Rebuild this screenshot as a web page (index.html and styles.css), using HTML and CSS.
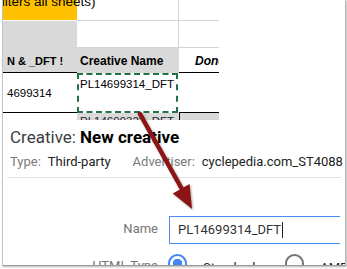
FILE: index.html
```html
<!DOCTYPE html>
<html>
<head>
<meta charset="utf-8">
<link rel="stylesheet" href="styles.css">
</head>
<body>
<div class="frame">
  <div class="sheet">
    <div class="cell yellow"><span class="cut">filters all sheets)</span></div>
    <div class="cell gb gr"></div>
    <div class="cell gb"></div>
    <div class="cell gray"></div>
    <div class="cell gb gr"></div>
    <div class="cell gb"></div>
    <div class="cell gray hdr bl hdr1">N &amp; _DFT !</div>
    <div class="cell gray hdr hdr2">Creative Name</div>
    <div class="cell hdr done bl">Done</div>
    <div class="cell val bl">4699314</div>
    <div class="cell sel">PL14699314_DFT</div>
    <div class="cell bl"></div>
    <div class="cell"></div>
    <div class="cell gray peek">PL14699323_DFT</div>
    <div class="cell gray tick"></div>
  </div>
  <div class="dialog">
    <div class="title"><span class="t-label">Creative:</span> <span class="t-name">New creative</span></div>
    <div class="meta"><span class="k">Type:</span><span class="v">Third-party</span><span class="k adv">Advertiser:</span><span class="v">cyclepedia.com_ST4088</span></div>
    <div class="sep"></div>
    <div class="row name-row">
      <div class="lbl">Name</div>
      <div class="input">PL14699314_DFT<span class="caret"></span></div>
    </div>
    <div class="row type-row">
      <div class="lbl">HTML Type</div>
      <div class="radios">
        <span class="radio on"></span><span class="rtext">Standard</span>
        <span class="radio off"></span><span class="rtext">AMPHTML</span>
      </div>
    </div>
  </div>
</div>
<svg class="arrow" width="347" height="269" viewBox="0 0 347 269">
  <line x1="140" y1="114" x2="183" y2="191" stroke="#8c1414" stroke-width="4.5" stroke-linecap="round"/>
  <polygon points="192,209 172.8,193.6 189.6,184" fill="#8c1414"/>
</svg>
</body>
</html>
```
FILE: styles.css
```css
html, body {
  margin: 0;
  padding: 0;
  background: #fff;
}
body {
  position: relative;
  width: 347px;
  height: 269px;
  overflow: hidden;
}
.frame {
  margin-left: 2px;
  width: 344px;
  height: 266px;
  box-sizing: border-box;
  border-left: 1px solid #c4c4c4;
  border-right: 1px solid #b8b8b8;
  border-bottom: 1px solid #9a9a9a;
  box-shadow: 1px 1px 2px rgba(0,0,0,0.3);
  overflow: hidden;
  background: #fff;
}
.sheet {
  display: grid;
  grid-template-columns: 74px 102px 40px;
  grid-template-rows: 21px 27px 25px 40px 7px;
  font-family: "Liberation Sans", Arial, sans-serif;
  color: #000;
}
.cell {
  box-sizing: border-box;
  overflow: hidden;
  white-space: nowrap;
}
.yellow {
  background: #ffc000;
  height: 20px;
  overflow: visible;
  position: relative;
  z-index: 1;
}
.cut {
  display: block;
  font-size: 13.5px;
  line-height: 13px;
  margin-top: -5px;
  margin-left: -5px;
  white-space: nowrap;
}
.gb { border-bottom: 1px solid #d4d4d4; }
.gr { border-right: 1px solid #d4d4d4; }
.gray { background: #d9d9d9; }
.bl { border-bottom: 1px solid #000; }
.hdr {
  font-weight: bold;
  font-size: 12px;
  line-height: 24px;
  padding-top: 1px;
}
.hdr1 { padding-left: 4px; font-size: 11px; }
.hdr2 { padding-left: 3px; }
.done {
  font-style: italic;
  padding-left: 16px;
  font-size: 12px;
}
.val {
  font-size: 11.5px;
  padding: 14px 0 0 4px;
}
.sel {
  border: 2px dashed #217346;
  width: 101px;
  font-size: 11.5px;
  padding: 2px 0 0 1px;
  line-height: 14px;
}
.peek {
  font-size: 11.5px;
  line-height: 13px;
  padding: 2px 0 0 3px;
  color: #222;
}
.tick { border-left: 1px solid #000; }

.dialog {
  font-family: Roboto, "Liberation Sans", Arial, sans-serif;
  padding: 7px 4px 0 7px;
  background: #fff;
}
.title {
  font-size: 17px;
  line-height: 20px;
  white-space: nowrap;
}
.t-label { color: #3c3c3c; }
.t-name { font-weight: bold; color: #000; }
.meta {
  margin-top: 7px;
  font-size: 13px;
  line-height: 16px;
  white-space: nowrap;
  display: flex;
}
.k { color: #7a7a7a; }
.v { color: #212121; margin-left: 7px; }
.adv { margin-left: 22px; }
.sep {
  margin: 7px 0 0 -3px;
  height: 1px;
  background: #e3e3e3;
}
.row {
  display: flex;
  align-items: center;
  gap: 11px;
}
.lbl {
  width: 148px;
  text-align: right;
  color: #757575;
  font-size: 13px;
  flex: none;
}
.name-row {
  margin-top: 38px;
}
.name-row .lbl { margin-top: -4px; }
.input {
  box-sizing: border-box;
  width: 171px;
  height: 28px;
  border: 1px solid #4d8ef2;
  border-right: none;
  padding-left: 8px;
  font-size: 13px;
  line-height: 26px;
  color: #333;
  display: flex;
  align-items: center;
}
.caret {
  display: inline-block;
  width: 1px;
  height: 16px;
  background: #222;
  margin-left: 1px;
}
.type-row {
  margin-top: 10px;
  align-items: flex-start;
}
.type-row .lbl { margin-top: 4px; line-height: 16px; }
.radios {
  display: flex;
  align-items: flex-start;
  margin-left: -1px;
}
.radio {
  box-sizing: border-box;
  width: 19px;
  height: 19px;
  border-radius: 50%;
  flex: none;
}
.radio.on {
  border: 2px solid #4285f4;
  background: radial-gradient(circle, #4285f4 0 4.5px, #fff 5px);
}
.radio.off {
  border: 2px solid #757575;
  margin-left: 30px;
}
.rtext {
  font-size: 13px;
  line-height: 16px;
  color: #212121;
  margin-left: 16px;
  margin-top: 6px;
}
.arrow {
  position: absolute;
  left: 0;
  top: 0;
  filter: drop-shadow(1px 1px 1px rgba(0,0,0,0.35));
  pointer-events: none;
}
```
